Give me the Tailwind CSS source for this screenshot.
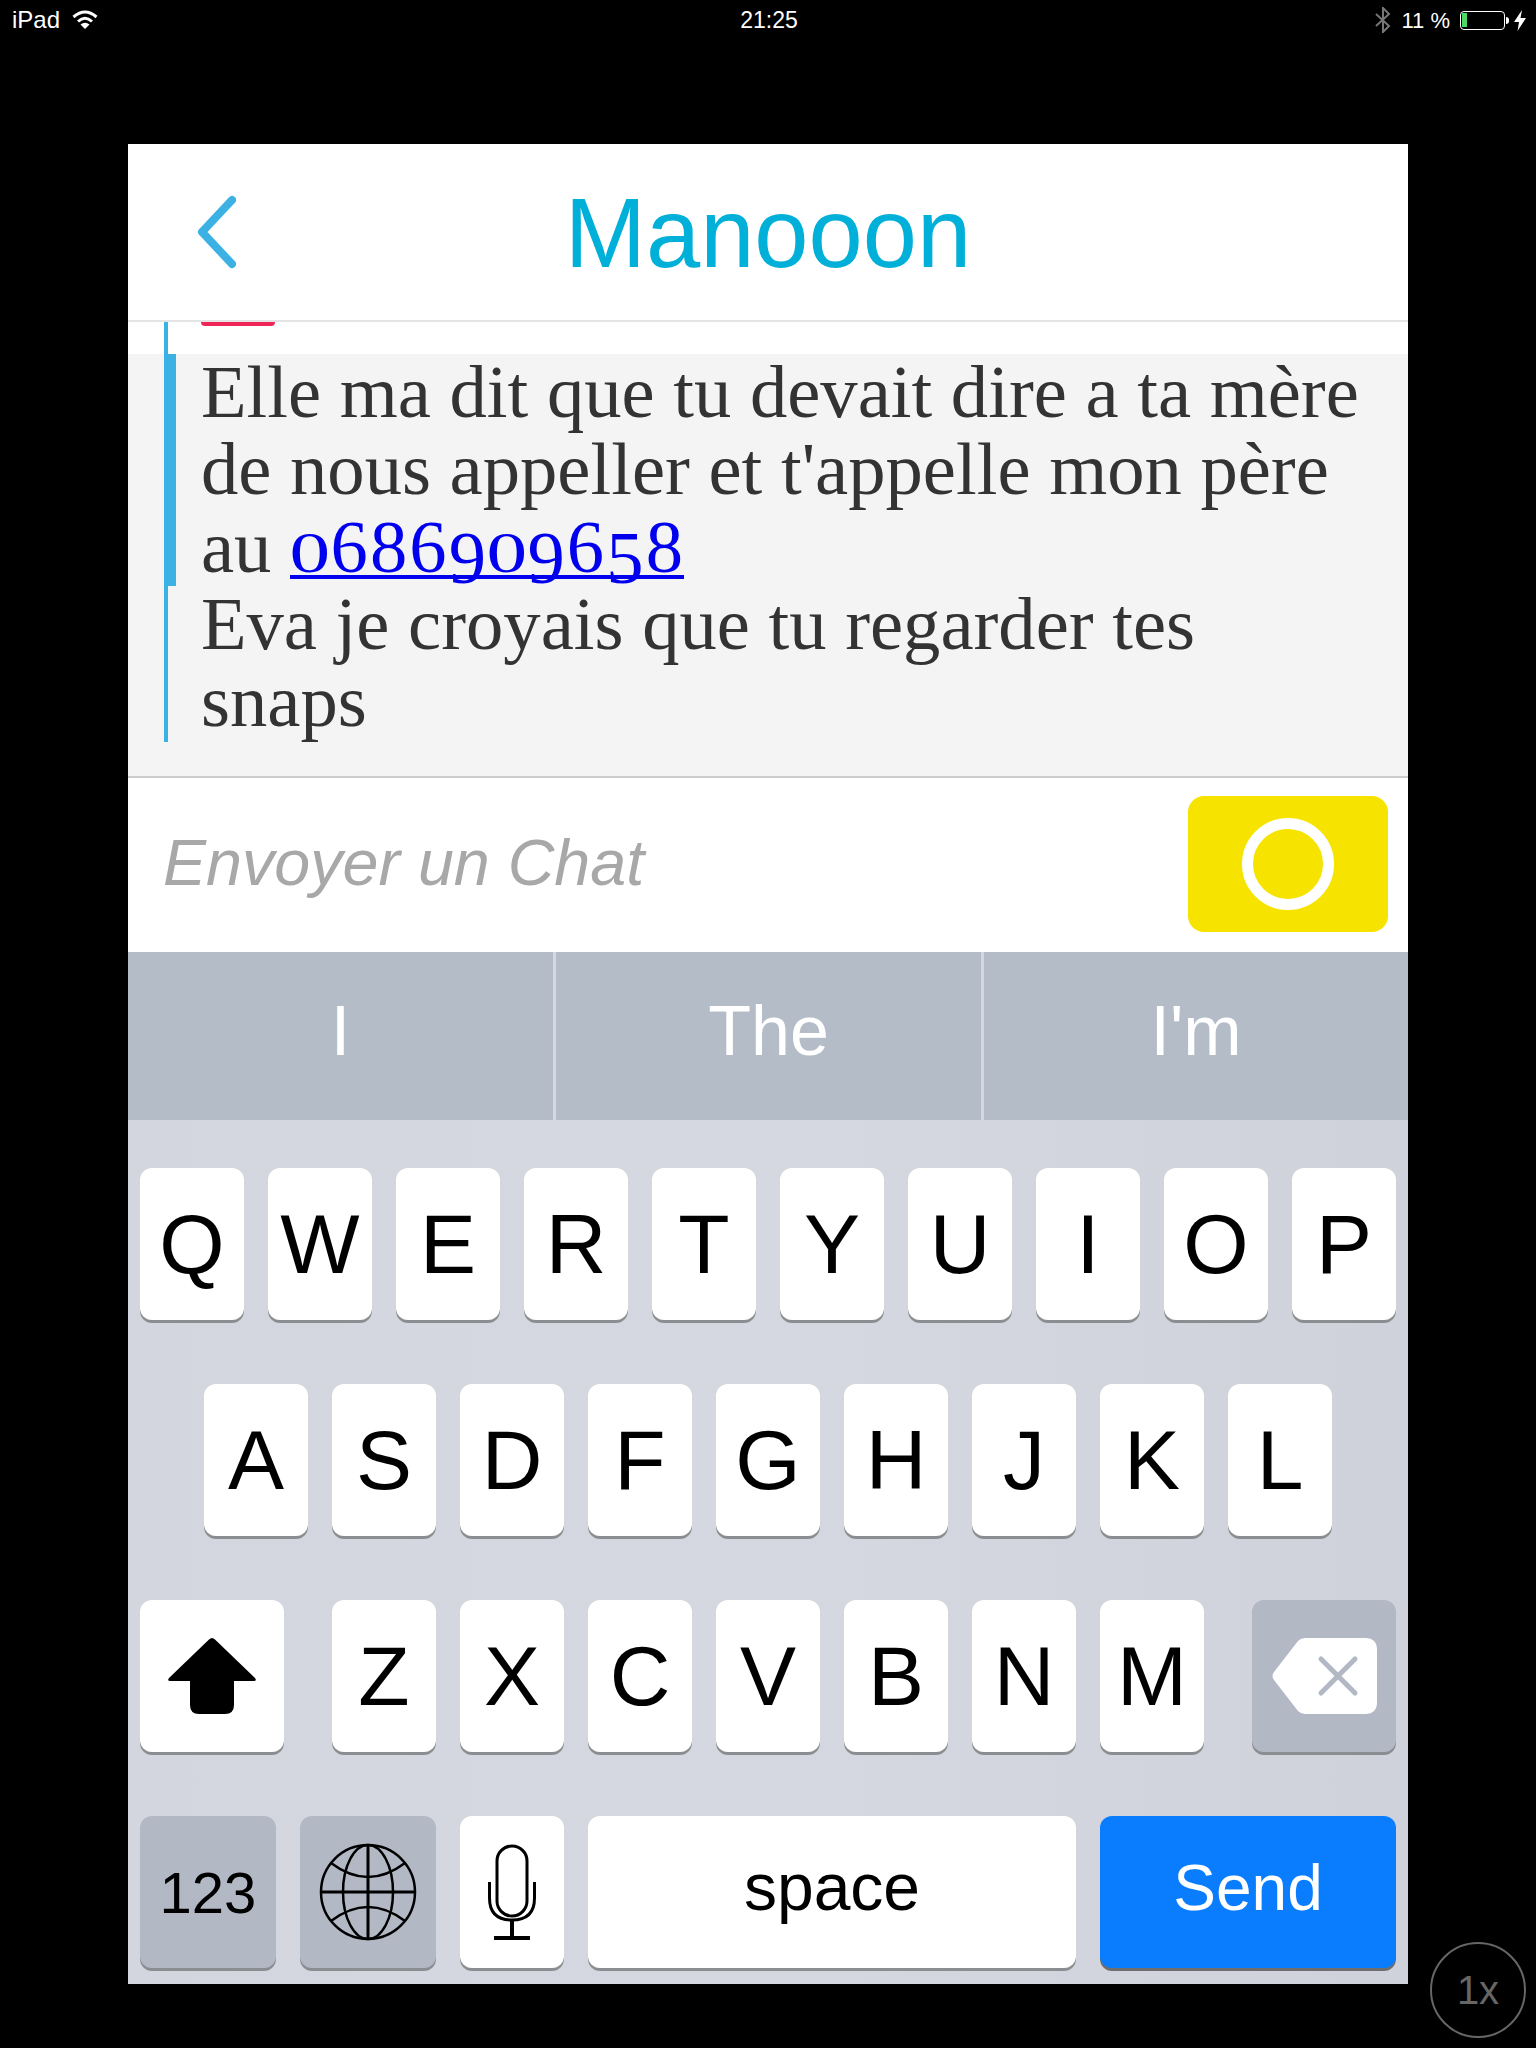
<!DOCTYPE html>
<html lang="en">
<head>
    <meta charset="UTF-8">
    <title>Manooon</title>
    <script src="https://cdn.jsdelivr.net/npm/@tailwindcss/browser@4"></script>
</head>
<body class="bg-black font-['Liberation_Sans',sans-serif]">
<div class="relative w-[1536px] h-[2048px] bg-black overflow-hidden">
    <!-- status bar -->
    <div class="grid grid-cols-3 items-center h-[40px] pl-[12px] pr-[10px] text-white text-[24px]">
        <div class="flex items-center gap-[12px]">
            <span>iPad</span>
            <svg width="26" height="20" viewBox="0 0 26 20" fill="none" stroke="white" stroke-width="3">
                <path d="M1.5 7 Q13 -3 24.5 7"/>
                <path d="M6 11.5 Q13 5 20 11.5"/>
                <path d="M13 19 L8.5 14.5 Q13 11 17.5 14.5 Z" fill="white" stroke="none"/>
            </svg>
        </div>
        <div class="text-center text-[23px]">21:25</div>
        <div class="flex items-center justify-end gap-[10px]">
            <svg width="16" height="26" viewBox="0 0 16 26" fill="none" stroke="#777" stroke-width="2">
                <path d="M1 7 L14 19 L8 25 V1 L14 7 L1 19"/>
            </svg>
            <span class="text-[22px]">11 %</span>
            <div class="flex items-center gap-[1px]">
                <div class="w-[45px] h-[19px] rounded-[4px] border-[1.5px] border-white p-[1.5px]">
                    <div class="w-[5px] h-full bg-[#4cd964]"></div>
                </div>
                <div class="w-[3px] h-[7px] bg-white rounded-r-[3px]"></div>
            </div>
            <svg class="-ml-[5px]" width="12" height="21" viewBox="0 0 12 21" fill="white"><path d="M8 0 L0 12 H5 L3.5 21 L12 8 H6.5 Z"/></svg>
        </div>
    </div>

    <div class="w-[1280px] ml-[128px] mt-[104px] flex flex-col">
        <!-- header -->
        <div class="relative h-[178px] bg-white border-b-2 border-[#e4e4e4] flex items-center justify-center pt-[4px]">
            <svg class="absolute left-[66px] top-[50px]" width="42" height="76" viewBox="0 0 42 76" fill="none" stroke="#3cb2e4" stroke-width="8" stroke-linecap="round" stroke-linejoin="round">
                <path d="M38 6 L8 38 L38 70"/>
            </svg>
            <span class="text-[97.500px] leading-none text-[#00b0d8]">Manooon</span>
        </div>

        <!-- chat -->
        <div class="relative h-[32px] bg-white">
            <div class="ml-[36px] h-full w-[4px] bg-[#3cb2e4]"></div>
            <div class="absolute left-[73px] top-0 w-[74px] h-[4px] bg-[#f0265a] rounded-b-[6px]"></div>
        </div>
        <div class="h-[424px] bg-[#f4f4f4] border-b-2 border-[#cccccc] pl-[36px]">
            <div class="relative h-[388px] border-l-4 border-[#3cb2e4] pl-[33px] font-['Liberation_Serif',serif] text-[74.600px] leading-[77.3px] text-[#333333]">
                <div class="absolute -left-[4px] top-0 w-[12px] h-[232px] bg-[#3cb2e4]"></div>
                Elle ma dit que tu devait dire a ta mère<br>
                de nous appeller et t'appelle mon père<br>
                au <a class="inline-block pb-[2px] border-b-4 border-[#0000ee] text-[#0000ee] leading-[40px]" href="#"><span class="inline-block w-[39.4px] text-center text-[58px] scale-x-[1.4]">0</span><span class="inline-block w-[39.4px] text-center">6</span><span class="inline-block w-[39.4px] text-center">8</span><span class="inline-block w-[39.4px] text-center">6</span><span class="inline-block w-[39.4px] text-center relative top-[11px]">9</span><span class="inline-block w-[39.4px] text-center text-[58px] scale-x-[1.4]">0</span><span class="inline-block w-[39.4px] text-center relative top-[11px]">9</span><span class="inline-block w-[39.4px] text-center">6</span><span class="inline-block w-[39.4px] text-center relative top-[11px]">5</span><span class="inline-block w-[39.4px] text-center">8</span></a><br>
                Eva je croyais que tu regarder tes<br>
                snaps
            </div>
        </div>

        <!-- input -->
        <div class="h-[174px] bg-white flex items-center justify-between pl-[35px] pr-[20px] pb-[2px]">
            <span class="text-[64.600px] italic text-[#a8a8a8] pb-[2px]">Envoyer un Chat</span>
            <div class="w-[200px] h-[136px] rounded-[16px] bg-[#f7e300] flex items-center justify-center">
                <div class="w-[92px] h-[92px] rounded-full border-[11px] border-white"></div>
            </div>
        </div>

        <!-- suggestions -->
        <div class="grid grid-cols-[428px_428px_1fr] h-[168px] bg-[#b4bcc8] text-white text-[70px]">
            <div class="flex items-center justify-center border-r-[3px] border-[#d5d8e0] pb-[10px]">I</div>
            <div class="flex items-center justify-center border-r-[3px] border-[#d5d8e0] pb-[10px]">The</div>
            <div class="flex items-center justify-center pb-[10px]">I'm</div>
        </div>

        <!-- keyboard -->
        <div class="h-[864px] bg-gradient-to-r from-[#d3d6de] via-[#d5d8e0] to-[#cfd2da] pt-[48px] flex flex-col gap-[64px] text-[84px] text-black">
            <div class="flex justify-center gap-[24px]">
                <div class="w-[104px] h-[152px] flex items-center justify-center rounded-[12px] bg-white shadow-[0_3px_0_#8c8d91]">Q</div>
                <div class="w-[104px] h-[152px] flex items-center justify-center rounded-[12px] bg-white shadow-[0_3px_0_#8c8d91]">W</div>
                <div class="w-[104px] h-[152px] flex items-center justify-center rounded-[12px] bg-white shadow-[0_3px_0_#8c8d91]">E</div>
                <div class="w-[104px] h-[152px] flex items-center justify-center rounded-[12px] bg-white shadow-[0_3px_0_#8c8d91]">R</div>
                <div class="w-[104px] h-[152px] flex items-center justify-center rounded-[12px] bg-white shadow-[0_3px_0_#8c8d91]">T</div>
                <div class="w-[104px] h-[152px] flex items-center justify-center rounded-[12px] bg-white shadow-[0_3px_0_#8c8d91]">Y</div>
                <div class="w-[104px] h-[152px] flex items-center justify-center rounded-[12px] bg-white shadow-[0_3px_0_#8c8d91]">U</div>
                <div class="w-[104px] h-[152px] flex items-center justify-center rounded-[12px] bg-white shadow-[0_3px_0_#8c8d91]">I</div>
                <div class="w-[104px] h-[152px] flex items-center justify-center rounded-[12px] bg-white shadow-[0_3px_0_#8c8d91]">O</div>
                <div class="w-[104px] h-[152px] flex items-center justify-center rounded-[12px] bg-white shadow-[0_3px_0_#8c8d91]">P</div>
            </div>
            <div class="flex justify-center gap-[24px]">
                <div class="w-[104px] h-[152px] flex items-center justify-center rounded-[12px] bg-white shadow-[0_3px_0_#8c8d91]">A</div>
                <div class="w-[104px] h-[152px] flex items-center justify-center rounded-[12px] bg-white shadow-[0_3px_0_#8c8d91]">S</div>
                <div class="w-[104px] h-[152px] flex items-center justify-center rounded-[12px] bg-white shadow-[0_3px_0_#8c8d91]">D</div>
                <div class="w-[104px] h-[152px] flex items-center justify-center rounded-[12px] bg-white shadow-[0_3px_0_#8c8d91]">F</div>
                <div class="w-[104px] h-[152px] flex items-center justify-center rounded-[12px] bg-white shadow-[0_3px_0_#8c8d91]">G</div>
                <div class="w-[104px] h-[152px] flex items-center justify-center rounded-[12px] bg-white shadow-[0_3px_0_#8c8d91]">H</div>
                <div class="w-[104px] h-[152px] flex items-center justify-center rounded-[12px] bg-white shadow-[0_3px_0_#8c8d91]">J</div>
                <div class="w-[104px] h-[152px] flex items-center justify-center rounded-[12px] bg-white shadow-[0_3px_0_#8c8d91]">K</div>
                <div class="w-[104px] h-[152px] flex items-center justify-center rounded-[12px] bg-white shadow-[0_3px_0_#8c8d91]">L</div>
            </div>
            <div class="flex px-[12px] gap-[24px]">
                <div class="w-[144px] h-[152px] mr-[24px] flex items-center justify-center rounded-[12px] bg-white shadow-[0_3px_0_#8c8d91]">
                    <svg width="90" height="78" viewBox="0 0 90 78" fill="black"><path d="M45 1 Q46.5 1 48 2.500 L88 41 Q90 44 87 44 H67 V68 Q67 77 58 77 H32 Q23 77 23 68 V44 H3 Q0 44 2 41 L42 2.500 Q43.500 1 45 1 Z"/></svg>
                </div>
                <div class="w-[104px] h-[152px] flex items-center justify-center rounded-[12px] bg-white shadow-[0_3px_0_#8c8d91]">Z</div>
                <div class="w-[104px] h-[152px] flex items-center justify-center rounded-[12px] bg-white shadow-[0_3px_0_#8c8d91]">X</div>
                <div class="w-[104px] h-[152px] flex items-center justify-center rounded-[12px] bg-white shadow-[0_3px_0_#8c8d91]">C</div>
                <div class="w-[104px] h-[152px] flex items-center justify-center rounded-[12px] bg-white shadow-[0_3px_0_#8c8d91]">V</div>
                <div class="w-[104px] h-[152px] flex items-center justify-center rounded-[12px] bg-white shadow-[0_3px_0_#8c8d91]">B</div>
                <div class="w-[104px] h-[152px] flex items-center justify-center rounded-[12px] bg-white shadow-[0_3px_0_#8c8d91]">N</div>
                <div class="w-[104px] h-[152px] flex items-center justify-center rounded-[12px] bg-white shadow-[0_3px_0_#8c8d91]">M</div>
                <div class="w-[144px] h-[152px] ml-[24px] flex items-center justify-center rounded-[12px] bg-[#b2b9c5] shadow-[0_3px_0_#8c8d91]">
                    <svg class="ml-[2px]" width="106" height="76" viewBox="0 0 106 76" fill="none">
                        <path d="M33 0 H93 Q105 0 105 12 V64 Q105 76 93 76 H33 Q29 76 26 73 L2 42 Q-1 38 2 34 L26 3 Q29 0 33 0 Z" fill="white"/>
                        <path d="M49 21 L83 55 M83 21 L49 55" stroke="#b2b9c5" stroke-width="5" stroke-linecap="round"/>
                    </svg>
                </div>
            </div>
            <div class="flex px-[12px] gap-[24px]">
                <div class="w-[136px] h-[152px] flex items-center justify-center rounded-[12px] bg-[#b2b9c5] shadow-[0_3px_0_#8c8d91] text-[58px]">123</div>
                <div class="w-[136px] h-[152px] flex items-center justify-center rounded-[12px] bg-[#b2b9c5] shadow-[0_3px_0_#8c8d91]">
                    <svg width="98" height="98" viewBox="0 0 98 98" fill="none" stroke="black" stroke-width="2.500">
                        <circle cx="49" cy="49" r="47"/>
                        <ellipse cx="49" cy="49" rx="25" ry="47"/>
                        <path d="M49 2 V96 M2 49 H96" stroke-width="3"/>
                        <path d="M12 20 Q49 48 86 20 M12 78 Q49 50 86 78"/>
                    </svg>
                </div>
                <div class="w-[104px] h-[152px] flex items-center justify-center rounded-[12px] bg-white shadow-[0_3px_0_#8c8d91]">
                    <svg width="50" height="96" viewBox="0 0 50 96" fill="none" stroke="black" stroke-width="3">
                        <rect x="10" y="2" width="30" height="70" rx="15"/>
                        <path d="M2.500 38 V54 Q2.500 76 25 76 Q47.500 76 47.500 54 V38"/>
                        <path d="M25 76 V94 M7 94 H43" stroke-width="4"/>
                    </svg>
                </div>
                <div class="w-[488px] h-[152px] flex items-center justify-center rounded-[12px] bg-white shadow-[0_3px_0_#8c8d91] text-[66px] pb-[10px]">space</div>
                <div class="w-[296px] h-[152px] flex items-center justify-center rounded-[12px] bg-[#0a7dff] shadow-[0_3px_0_#6e6e6e] text-[64px] text-white pb-[8px]">Send</div>
            </div>
        </div>
    </div>

    <!-- zoom badge -->
    <div class="absolute left-[1430px] top-[1942px] w-[96px] h-[96px] rounded-full border-[2px] border-[#666666] flex items-center justify-center text-[#666666] text-[40px]">1x</div>
</div>
</body>
</html>
